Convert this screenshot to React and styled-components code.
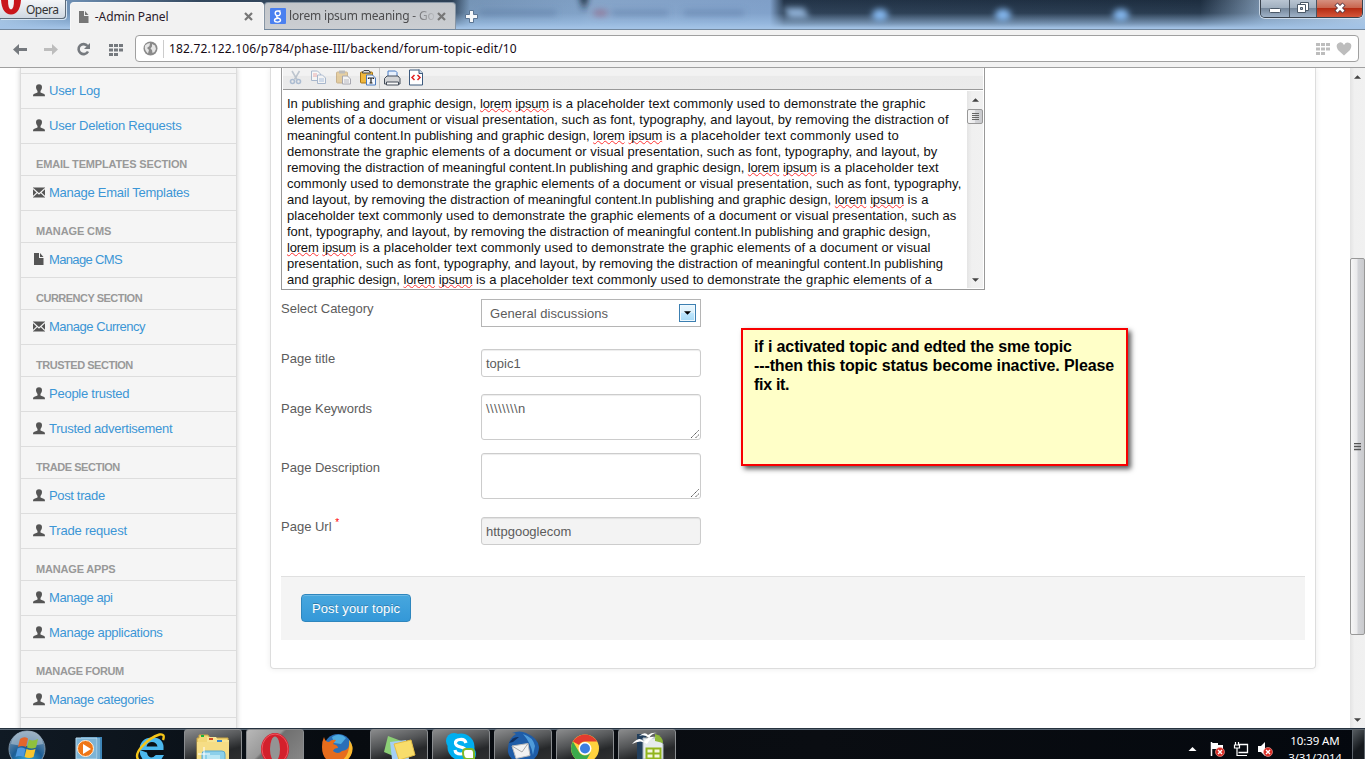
import React from "react";
import styled, { createGlobalStyle, css } from "styled-components";

const Global = createGlobalStyle`
  *, *::before, *::after { box-sizing: border-box; }
  html, body { margin: 0; padding: 0; }
  body { overflow: hidden; background: #fff; }
`;

const ui = `"Noto Sans", "Open Sans", sans-serif`;
const arial = `"Liberation Sans", Arial, sans-serif`;

const Screen = styled.div`
  width: 1365px;
  height: 759px;
  display: flex;
  flex-direction: column;
  overflow: hidden;
  font-family: ${arial};
`;

/* ---------- window chrome ---------- */
const TitleBar = styled.header`
  height: 30px;
  flex: none;
  display: flex;
  align-items: flex-start;
  border-bottom: 1px solid #73889e;
  position: relative;
  background:
    linear-gradient(180deg, rgba(150, 190, 230, 0) 0, rgba(150, 190, 230, 0.1) 45%, rgba(160, 195, 232, 0.65) 80%, #a3c3e6 97%),
    linear-gradient(90deg, #a9c3dc 0, #6d8eb2 70px, #33475d 200px, #2c3f54 452px, #7594b6 470px, #7f9fc4 580px, #86a4c8 590px, #7f9fc8 770px, #233448 784px, #1d2d3f 1200px, #7b93ad 1265px, #b4c9df 1365px);
`;
const Ghosts = styled.svg`
  position: absolute;
  left: 456px;
  top: 0;
`;
const OperaButton = styled.div`
  width: 66px;
  height: 19px;
  border: 1px solid #5d6b7a;
  border-width: 0 1px 1px 0;
  border-radius: 0 0 4px 0;
  background: linear-gradient(#f4f6f8, #cfd8e2);
  box-shadow: 1px 1px 0 #d6e5f3;
  display: flex;
  font: 12px/20px ${ui};
  letter-spacing: -0.5px;
  color: #333;
  gap: 4px;
  margin-right: 4px;
  position: relative;
`;
const Tab = styled.div`
  position: relative;
  height: ${(p) => (p.$active ? 28 : 27)}px;
  width: ${(p) => (p.$active ? 194 : 192)}px;
  margin-top: 2px;
  display: flex;
  align-items: center;
  padding: 0 ${(p) => (p.$active ? 10 : 9)}px 0 ${(p) => (p.$active ? 7 : 5)}px;
  border: 1px solid ${(p) => (p.$active ? "#f8f8f8" : "#8795a4")};
  border-bottom: 0;
  border-radius: 4px 4px 0 0;
  background: ${(p) => (p.$active ? "#f2f2f2" : "linear-gradient(#c3c6ca, #cbced2)")};
`;
const TabTitle = styled.span`
  flex: 1;
  margin-left: 3px;
  font: 12px/18px ${ui};
  letter-spacing: ${(p) => p.$ls || 0}px;
  white-space: nowrap;
  overflow: hidden;
  color: ${(p) => (p.$active ? "#2a1a2a" : "#4c4c4e")};
  ${(p) => !p.$active && css`mask-image: linear-gradient(90deg, #000 82%, transparent 100%);`}
`;
const NewTab = styled.svg`
  position: relative;
  margin: 10px 0 0 9px;
`;
const WindowButtons = styled.div`
  margin-left: auto;
  margin-right: 2px;
  display: flex;
  height: 18px;
  border: 1px solid #39424d;
  border-top: 0;
  border-radius: 0 0 5px 5px;
  overflow: hidden;
  box-shadow: 0 0 0 1px rgba(225, 235, 245, 0.75);
`;
const WinButton = styled.div`
  width: ${(p) => p.$w}px;
  display: flex;
  justify-content: center;
  background: ${(p) =>
    p.$close
      ? "linear-gradient(#d5907f 0, #c9664f 45%, #b52c13 50%, #d5563a 100%)"
      : "linear-gradient(#b9c5d2 0, #a0afbf 45%, #76889c 50%, #9fb2c8 100%)"};
  & + & { border-left: 1px solid #4a5561; }
`;

const NavBar = styled.nav`
  height: 38px;
  flex: none;
  display: flex;
  align-items: center;
  background: #f2f2f2;
  border-bottom: 1px solid #a0a0a0;
  padding: 0 6px 0 13px;
`;
const NavIcons = styled.svg`
  flex: none;
  margin-right: 12px;
`;
const AddressBar = styled.div`
  flex: 1;
  height: 27px;
  display: flex;
  align-items: center;
  background: #fff;
  border: 1px solid #a0a0a0;
  border-radius: 4px;
  padding: 0 6px 0 7px;
`;
const Url = styled.span`
  flex: 1;
  margin-left: 5px;
  border-left: 1px solid #ccc;
  padding-left: 5px;
  font: 12px/18px ${ui};
  letter-spacing: 0.15px;
  color: #150a15;
`;

/* ---------- page ---------- */
const Viewport = styled.div`
  height: 660px;
  flex: none;
  display: flex;
  align-items: flex-start;
  overflow: hidden;
  background: #fff;
  position: relative;
`;
const Sidebar = styled.aside`
  width: 217px;
  height: 670px;
  flex: none;
  margin-left: 20px;
  background: #f5f5f5;
  border: solid #dcdcdc;
  border-width: 0 1px;
  box-shadow: 0 0 5px rgba(0, 0, 0, 0.2);
`;
const SideTop = styled.div`
  height: 6px;
  border-bottom: 1px solid #dddddd;
`;
const SideHeading = styled.h2`
  margin: 0;
  height: 32px;
  padding: 11px 0 0 15px;
  border-bottom: 1px solid #dddddd;
  font: bold 11px/18px ${arial};
  letter-spacing: ${(p) => p.$ls}px;
  color: #999;
  white-space: nowrap;
`;
const SideItem = styled.div`
  height: 35px;
  display: flex;
  align-items: center;
  padding: 0 0 2px 12px;
  border-bottom: 1px solid #dddddd;
  font-size: 13px;
  letter-spacing: ${(p) => p.$ls}px;
  color: #3c96d6;
  white-space: nowrap;
  gap: 4px;
`;
const Panel = styled.main`
  width: 1046px;
  height: 601px;
  flex: none;
  margin-left: 33px;
  padding: 0 10px;
  border: 1px solid #dddddd;
  border-top: 0;
  border-radius: 0 0 4px 4px;
  box-shadow: 0 0 6px rgba(0, 0, 0, 0.08);
`;
const Editor = styled.section`
  width: 704px;
  height: 222px;
  border: 1px solid #999;
  border-top: 0;
  display: flex;
  flex-direction: column;
  padding: 0 1px 1px;
`;
const Toolbar = styled.div`
  height: 22px;
  flex: none;
  border-bottom: 1px solid #999;
  background: linear-gradient(#f2f2f2 0, #f2f2f2 35%, #eaeaea 40%, #ebebeb 100%);
`;
const EditorBody = styled.div`
  flex: 1;
  min-height: 0;
  display: flex;
  padding-top: 1px;
`;
const EditorText = styled.div`
  flex: 1;
  padding: 5px 0 0 4px;
  overflow: hidden;
`;
const Line = styled.div`
  height: 16px;
  font: 13px/16px ${arial};
  letter-spacing: ${(p) => p.$ls}px;
  color: #111;
  white-space: nowrap;
`;
const Run = styled.span`
  letter-spacing: ${(p) => p.$ls}px;
`;
const Misspelt = styled.span`
  text-decoration: underline wavy #f33 1px;
  text-decoration-skip-ink: none;
  text-underline-offset: 0;
  letter-spacing: -0.2px;
`;
const Track = styled.div`
  width: ${(p) => p.$w}px;
  height: 100%;
  flex: none;
  display: flex;
  flex-direction: column;
  align-items: stretch;
  background: linear-gradient(90deg, #e4e4e4, #f0f0f0 30%, #f1f1f1);
`;
const ArrowBox = styled.div`
  height: ${(p) => p.$h}px;
  display: flex;
  align-items: center;
  justify-content: center;
`;
const Thumb = styled.div`
  height: ${(p) => p.$h}px;
  margin-top: ${(p) => p.$top || 0}px;
  border: 1px solid #989898;
  border-radius: 2px;
  background: linear-gradient(90deg, #f6f6f6, #e9e9eb 48%, #d3d4d8 52%, #c9cacd);
  display: flex;
  align-items: center;
  justify-content: center;
`;
const Spring = styled.div`flex: 1;`;

const Field = styled.div`
  display: flex;
  align-items: flex-start;
  height: ${(p) => p.$h}px;
`;
const Label = styled.label`
  width: 200px;
  padding-top: ${(p) => p.$top || 0}px;
  font: 13px/20px ${arial};
  color: #5c5c5c;
`;
const Required = styled.sup`
  color: #f00;
  font-size: 10px;
  line-height: 0;
`;
const Control = styled.div`
  position: relative;
  width: 220px;
  height: ${(p) => p.$h}px;
  padding: 4px;
  border: 1px solid #ccc;
  border-radius: 3px;
  background: ${(p) => (p.$disabled ? "#f3f3f3" : "#fff")};
  box-shadow: inset 0 1px 1px rgba(0, 0, 0, 0.075);
  font: 13px/20px ${arial};
  letter-spacing: ${(p) => p.$ls || 0}px;
  color: #5c5c5c;
`;
const Select = styled(Control)`
  display: flex;
  justify-content: space-between;
  align-items: center;
  padding: 0 4px 0 8px;
  border-radius: 0;
  border-color: #b5b5b5;
  box-shadow: none;
`;
const SelectValue = styled.span`
  padding-top: 2px;
`;
const SelectArrow = styled.div`
  width: 17px;
  height: 18px;
  border: 1px solid #3c7fb1;
  background: linear-gradient(#eaf6fd 0, #d9f0fc 50%, #bee6fd 51%, #a7d9f5 100%);
  box-shadow: inset 0 0 0 1px #eef9ff;
  display: flex;
  align-items: center;
  justify-content: center;
`;
const Grip = styled.svg`
  position: absolute;
  right: 1px;
  bottom: 1px;
`;
const Actions = styled.div`
  height: 64px;
  padding: 17px 20px;
  border-top: 1px solid #e0e0e0;
  background: #f4f4f4;
`;
const PostButton = styled.button`
  width: 110px;
  height: 28px;
  padding: 1px 0 0;
  border: 1px solid #2e86bd;
  border-radius: 4px;
  background: linear-gradient(#47a7de, #3498d8);
  box-shadow: inset 0 1px 0 rgba(255, 255, 255, 0.2);
  color: #fff;
  font: 13px/20px ${arial};
  letter-spacing: 0.15px;
  text-shadow: 0 -1px 0 rgba(0, 0, 0, 0.25);
`;
const Note = styled.div`
  position: absolute;
  left: 741px;
  top: 260px;
  width: 387px;
  height: 138px;
  padding: 7px 11px;
  border: 2px solid #f80000;
  background: #ffffc8;
  box-shadow: 3px 3px 5px rgba(0, 0, 0, 0.65);
  font: bold 16px/19px ${arial};
  color: #000;
`;
const NoteLine = styled.div`
  white-space: nowrap;
  letter-spacing: ${(p) => p.$ls || -0.11}px;
`;

/* ---------- taskbar ---------- */
const Taskbar = styled.footer`
  height: 31px;
  flex: none;
  display: flex;
  background: linear-gradient(90deg, #101a24, #070b10 25%, #0a0d12 60%, #04080e);
  border-top: 1px solid #26323f;
  box-shadow: inset 0 1px 0 #5b6875;
  overflow: hidden;
`;
const TaskButton = styled.div`
  width: ${(p) => p.$w || 58}px;
  height: 40px;
  margin-right: 4px;
  flex: none;
  display: flex;
  justify-content: center;
  ${(p) => p.$open && css`
    border: 1px solid #8a8d90;
    border-radius: 3px;
    background: ${p.$active
      ? "linear-gradient(135deg, #b8b8b8 0, #999 38%, #707070 42%, #8c8c8c 100%)"
      : "linear-gradient(165deg, #8a8b8c 0, #545658 35%, #26282a 60%, #333 100%)"};
  `}
`;
const Tray = styled.div`
  margin-left: auto;
  display: flex;
  color: #fff;
`;
const Clock = styled.div`
  width: 74px;
  padding-top: 3px;
  font: 11.5px/17px ${ui};
  letter-spacing: -0.1px;
  text-align: center;
  white-space: nowrap;
`;
const ShowDesktop = styled.div`
  width: 13px;
  height: 31px;
  border: 1px solid #5d646b;
  background: linear-gradient(135deg, #555b60, #15191d 60%);
`;

/* ---------- icons ---------- */
const UserIcon = () => (
  <svg width="12" height="13" viewBox="0 0 12 13" fill="#555">
    <path d="M3 3.2Q3 .3 6 .3T9 3.2Q9 5.6 7.500 7v1.400l3.700 1.500q.8.4.8 2.400H0q0-2 .8-2.400l3.700-1.500V7Q3 5.600 3 3.200Z" />
  </svg>
);
const MailIcon = () => (
  <svg width="12" height="11" viewBox="0 0 12 11">
    <path d="M0 .5h12v10H0z" fill="#555" />
    <path d="M0 1.500 6 7l6-5.500M0 9.600 4.100 5.600M12 9.600 7.900 5.600" stroke="#f5f5f5" strokeWidth="1.200" fill="none" />
  </svg>
);
const FileIcon = ({ fill = "#555", s = 12 }) => (
  <svg width={s} height={s} viewBox="0 0 12 12" fill={fill}>
    <path d="M1 0h5v5h4.500v7H1zM7 0l3.500 4H7z" />
  </svg>
);
const sideIcons = { user: UserIcon, mail: MailIcon, file: FileIcon };

const CloseIcon = () => (
  <svg width="9" height="9" viewBox="0 0 9 9">
    <path d="M1 1l7 7M8 1 1 8" stroke="#777" strokeWidth="2.200" />
  </svg>
);
const Arrow = ({ down, c = "#444" }) => (
  <svg width="7" height="4" viewBox="0 0 8 4">
    <path d={down ? "M0 0h8L4 4z" : "M0 4h8L4 0z"} fill={c} />
  </svg>
);
const dials = [[0, 0], [5, 0], [10, 0], [0, 4.5], [5, 4.5], [10, 4.5], [0, 9], [5, 9]];
const Dial = ({ x, y, fill }) => (
  <g fill={fill}>
    {dials.map(([a, b]) => <rect key={`${a}-${b}`} x={x + a} y={y + b} width="4" height="3" />)}
  </g>
);
const GripIcon = () => (
  <Grip width="8" height="8" viewBox="0 0 8 8">
    <path d="M0 8 8 0M4.500 8 8 4.500" stroke="#555" strokeWidth="1" strokeDasharray="1.400 .5" />
  </Grip>
);

/* ---------- data ---------- */
const side = [
  ["user", "User Log", -0.2], ["user", "User Deletion Requests", -0.22],
  ["h", "EMAIL TEMPLATES SECTION", -0.16], ["mail", "Manage Email Templates", -0.25],
  ["h", "MANAGE CMS", -0.12], ["file", "Manage CMS", -0.65],
  ["h", "CURRENCY SECTION", -0.5], ["mail", "Manage Currency", -0.48],
  ["h", "TRUSTED SECTION", -0.47], ["user", "People trusted", -0.25], ["user", "Trusted advertisement", -0.26],
  ["h", "TRADE SECTION", -0.46], ["user", "Post trade", -0.35], ["user", "Trade request", -0.2],
  ["h", "MANAGE APPS", -0.18], ["user", "Manage api", -0.45], ["user", "Manage applications", -0.3],
  ["h", "MANAGE FORUM", -0.37], ["user", "Manage categories", -0.35],
];

/* text, tracking, and tracking before the misspelt words where it differs */
const lines = [
  ["In publishing and graphic design, lorem ipsum is a placeholder text commonly used to demonstrate the graphic", 0.07, -0.02],
  ["elements of a document or visual presentation, such as font, typography, and layout, by removing the distraction of", 0.03],
  ["meaningful content.In publishing and graphic design, lorem ipsum is a placeholder text commonly used to", 0.22, -0.02],
  ["demonstrate the graphic elements of a document or visual presentation, such as font, typography, and layout, by", 0.04],
  ["removing the distraction of meaningful content.In publishing and graphic design, lorem ipsum is a placeholder text", 0.13, -0.03],
  ["commonly used to demonstrate the graphic elements of a document or visual presentation, such as font, typography,", 0.035],
  ["and layout, by removing the distraction of meaningful content.In publishing and graphic design, lorem ipsum is a", 0.2, 0],
  ["placeholder text commonly used to demonstrate the graphic elements of a document or visual presentation, such as", 0.028],
  ["font, typography, and layout, by removing the distraction of meaningful content.In publishing and graphic design,", 0],
  ["lorem ipsum is a placeholder text commonly used to demonstrate the graphic elements of a document or visual", 0.085],
  ["presentation, such as font, typography, and layout, by removing the distraction of meaningful content.In publishing", 0.02],
  ["and graphic design, lorem ipsum is a placeholder text commonly used to demonstrate the graphic elements of a", 0.075, -0.03],
];
const spell = (text, before) =>
  text.split(/(lorem|ipsum)/).map((t, i) => {
    if (i % 2) return <Misspelt key={i}>{t}</Misspelt>;
    return i === 0 && before !== undefined ? <Run key={i} $ls={before}>{t}</Run> : t;
  });

const EditorTools = () => (
  <svg width="150" height="21" viewBox="283 67.5 150 21" style={{ display: "block" }}>
    <g opacity=".5" fill="none" stroke="#6f8fb8" strokeWidth="1.600">
      <path d="M292 70.500l5 8.500M299.500 70.500l-5 8.500" stroke="#8c9cae" />
      <circle cx="292.500" cy="81" r="2" /><circle cx="298.500" cy="81" r="2" />
    </g>
    <g opacity=".5" stroke="#6684ae" fill="#fff">
      <path d="M311.500 70.500h6l3 3v6.500h-9z" /><path d="M317.500 74.500h5l3 3v5.500h-8z" />
      <path d="M313 73.500h4M313 75.500h4" stroke="#d66" /><path d="M319 78.500h5M319 80.500h5" stroke="#6b95cf" />
    </g>
    <g opacity=".5">
      <rect x="336.500" y="71.500" width="11" height="11" rx="1" fill="#dcae55" stroke="#a77b34" />
      <rect x="339" y="70" width="6" height="3" fill="#888" />
      <path d="M342.500 75.500h5l3 3v5h-8z" fill="#fff" stroke="#667" /><path d="M344 79.500h5M344 81.500h5" stroke="#889" />
    </g>
    <rect x="360.500" y="71.500" width="12" height="11" rx="1" fill="#f1b83d" stroke="#a87517" />
    <path d="M362.500 71.500 364 70h5l1.500 2.500h-8z" fill="#ddd" stroke="#444" />
    <path d="M366.500 74.500h6l3 3v7h-9z" fill="#f4f8ff" stroke="#4978bd" />
    <path d="M368.500 78.500v-1h5v1M371 77.500v5M369.500 82.500h3" stroke="#222" fill="none" strokeWidth="1.200" />
    <path d="M379.500 67v21" stroke="#c4c4c4" />
    <path d="M388 76.500v-6h7.500l1.500 1.500v4.500z" fill="#e7f0fd" stroke="#4a7cc4" />
    <path d="M384.500 78 387 75.500h11l2 2.500v5.500h-15.500z" fill="#d3d4d6" stroke="#444d59" />
    <path d="M386.500 81.500h12v3h-12z" fill="#f7f7f7" stroke="#444d59" />
    <path d="M409.500 69.500h10l3 3v12h-13z" fill="#fff" stroke="#3d5a7d" />
    <path d="M419 69v4h4" fill="#c7d5e5" stroke="#3d5a7d" />
    <path d="M414.500 74.500 412 77l2.500 2.500M417.500 74.500 420 77l-2.500 2.500" stroke="#e02020" strokeWidth="1.500" fill="none" />
  </svg>
);

const StartOrb = () => (
  <svg width="38" height="30" viewBox="8 729 38 30">
    <defs>
      <radialGradient id="orb" cx=".5" cy=".9" r=".9"><stop offset="0" stopColor="#35b7e8" /><stop offset=".5" stopColor="#1c5d94" /><stop offset="1" stopColor="#829ab0" /></radialGradient>
    </defs>
    <circle cx="27" cy="749" r="18" fill="url(#orb)" stroke="#7d94a8" />
    <path d="M11 744q2-12 16-13t16 13q-16 4-32 0z" fill="#b8c8d6" opacity=".55" />
    <path d="M20 739q4-3 8-.5l-2 8.500q-4-2-8 0z" fill="#e2662c" />
    <path d="M29 739.500q4 2 9-.5l-2 8.500q-4 2-9 0z" fill="#8fc13d" />
    <path d="M17.500 748.500q4-2 8 .5l-2 8q-4-2-8 0z" fill="#4d97dc" />
    <path d="M26.500 749q4 2 9 0l-2 8q-4 2-9 0z" fill="#f8c62e" />
  </svg>
);
const MediaIcon = () => (
  <svg width="32" height="30" viewBox="71 729 32 30">
    <path d="M80 737h21v22H80z" fill="#3f86b8" /><path d="M75 738h21v21H75z" fill="#7db4d6" stroke="#b9d9ec" />
    <path d="M98 738v21" stroke="#a6d0e6" />
    <circle cx="84.500" cy="748.500" r="8" fill="#ef7616" stroke="#fff0dc" /><path d="M82 744l8 5-8 5z" fill="#fff" />
  </svg>
);
const IEIcon = () => (
  <svg width="36" height="30" viewBox="133 729 36 30">
    <path d="M140 750h23.500q1-12.500-11-12.500-12.500 0-13 12.500 0 5 3 9h19l2.500-4h-8q-7 3-8-2z" fill="#4cb8ee" />
    <path d="M146.500 746.500q1-4.500 5.500-4.500t5.500 4.500z" fill="#0a1016" />
    <path d="M147 751.500h17v3h-8q-2 3-5 3-4-1-4-6z" fill="#0a1016" />
    <path d="M138.500 760q-4-5 3-13 9-10 18-12.500 6-1 3.500 5.500" fill="none" stroke="#f5c518" strokeWidth="2.400" />
  </svg>
);
const ExplorerIcon = () => (
  <svg width="36" height="29" viewBox="195 730 36 29">
    <path d="M199 735h9l2 3h18v21h-31v-21h2z" fill="#f2d777" stroke="#c9a544" />
    <path d="M207 737h9l2 3h11v19h-22z" fill="#f8e594" /><path d="M197 742h32v17h-32z" fill="#f6dd85" />
    <path d="M201 735h3v2h-3z" fill="#19b43d" /><path d="M209 738h4v2h-4z" fill="#d54b22" /><path d="M217 740h5v2h-5z" fill="#3587d6" />
    <path d="M202 759v-5q0-3 3-3h17q3 0 3 3v5" fill="#8cd0ea" stroke="#5aa9cc" /><path d="M207 759v-4h13v4" fill="#b8e6f4" />
    <path d="M204 747v13M198 754h12" stroke="#fff" strokeWidth="1" />
  </svg>
);
const OperaTask = () => (
  <svg width="34" height="29" viewBox="258 730 34 29">
    <ellipse cx="275" cy="749" rx="14" ry="16" fill="#d3202c" /><ellipse cx="275" cy="749" rx="5" ry="12.500" fill="#949494" />
    <ellipse cx="275" cy="749" rx="13" ry="15" fill="none" stroke="#ef5560" />
  </svg>
);
const FirefoxIcon = () => (
  <svg width="34" height="30" viewBox="320 729 34 30">
    <circle cx="338" cy="748" r="14" fill="#2a6fb8" /><path d="M332 737q8-5 14 1l-5 6-7-1z" fill="#4dabe0" />
    <path d="M324 737q1 5 5 5 3-3 7-2l-3 4q5 1 5 4-4 0-5 3 5 4 9 0 8-1 7-9 5 4 2 13-4 9-14 9-15-2-15-17 0-6 2-10z" fill="#e66c1c" />
    <path d="M349 740q6 7 2 15-4 7-12 8 12-8 10-23z" fill="#f9b82d" />
  </svg>
);
const NotesIcon = () => (
  <svg width="34" height="29" viewBox="382 730 34 29">
    <path d="M388 736l16 6-6 16-14-6z" fill="#8ccf76" /><path d="M390 742l16-2 3 19h-17z" fill="#a4cff5" />
    <path d="M394 744l17-4 4 15-16 5z" fill="#f8dd6b" stroke="#e4be47" />
  </svg>
);
const SkypeIcon = () => (
  <svg width="34" height="29" viewBox="444 730 34 29">
    <circle cx="454" cy="741" r="8" fill="#00aff0" /><circle cx="461" cy="747" r="13.500" fill="#00aff0" /><circle cx="468" cy="754" r="8" fill="#00aff0" />
    <path d="M466 743q-1-4-6-3.500-5 .5-4.500 4 .5 2.500 5 3.500 5 1 5 4t-5 3q-5 0-5.500-4" fill="none" stroke="#fff" strokeWidth="3.200" />
    <path d="M463 752q0-3 3-3h5q3 0 3 4v6h-7q-4 0-4-7z" fill="#fff" stroke="#7fb828" strokeWidth="2" />
  </svg>
);
const BirdIcon = () => (
  <svg width="36" height="29" viewBox="505 730 36 29">
    <path d="M508 752q-1-13 8-18-1-1-4-1 8-3 14 0 12 5 13 14 0 8-6 13h-20q-4-3-5-8z" fill="#1f5da8" />
    <path d="M523 734q10 3 12 12l-2 9q-2-12-10-21z" fill="#4f9bd9" /><path d="M509 743q4-7 10-6l-6 5z" fill="#11305f" />
    <path d="M512 746l16-2.500 2 12-14 3z" fill="#f2f2f2" stroke="#bbb" /><path d="M512 746l10 6 6-8.500" fill="none" stroke="#a9a9a9" />
  </svg>
);
const ChromeTask = () => (
  <svg width="32" height="29" viewBox="569 732.5 32 29">
    <circle cx="585" cy="751" r="14" fill="#ffd23e" />
    <path d="M572.900 744A14 14 0 0 1 597.100 744H585a7 7 0 0 0-6 3.500z" fill="#e33b2e" />
    <path d="M572.900 744A14 14 0 0 0 585 765l6-10.500a7 7 0 0 1-12 0z" fill="#3cab4c" />
    <circle cx="585" cy="751" r="6.500" fill="#fff" /><circle cx="585" cy="751" r="5" fill="#3d7fe0" />
  </svg>
);
const OfficeIcon = () => (
  <svg width="36" height="29" viewBox="629 730 36 29">
    <path d="M637 734h9v25h-9z" fill="#233f5c" /><path d="M643 738h15l5 6v15h-20z" fill="#e6ebef" stroke="#a7b2ba" /><path d="M655 734q8 2 8 9l-8-2z" fill="#8fb83a" />
    <path d="M632 744q8-9 12-2 4-6 12-5-6 1-9 7-6-5-15 0zM639 736q6-5 9-1 4-3 9-2-5 0-8 5-4-4-10-2z" fill="#fff" />
    <path d="M646.500 748.500h14v10h-14zM653.500 748v11M646 753.500h15" fill="#f4f7dc" stroke="#92b51c" strokeWidth="2" />
  </svg>
);

const Badge = ({ x, y }) => (
  <g>
    <circle cx={x} cy={y} r="4.500" fill="#d92a22" stroke="#f3aaa5" strokeWidth=".6" />
    <path d={`M${x - 2} ${y - 2}l4 4m0-4-4 4`} stroke="#fff" strokeWidth="1.400" />
  </g>
);

export default function App() {
  return (
    <Screen>
      <Global />
      <TitleBar>
        <Ghosts width="800" height="29" viewBox="456 0 800 29">
          <defs>
            <filter id="soft" filterUnits="userSpaceOnUse" x="456" y="-20" width="800" height="70">
              <feGaussianBlur stdDeviation="3" />
            </filter>
          </defs>
          <g filter="url(#soft)">
            <path d="M579 -6h10l-5 17z" fill="#182635" />
            <path d="M480 13h76M612 13h56M684 13h60" stroke="#50709a" strokeWidth="5" opacity=".45" />
            <path d="M594 13h13" stroke="#9a5c78" strokeWidth="6" opacity=".6" />
            <path d="M784 8h20l5 10h-20z" fill="#91b2d8" />
            <g fill="#84b8f0"><ellipse cx="880" cy="15" rx="8" ry="6" /><ellipse cx="1003" cy="15" rx="8" ry="6" /><ellipse cx="1121" cy="15" rx="8" ry="6" /></g>
          </g>
        </Ghosts>
        <OperaButton>
          <svg width="22" height="16" viewBox="0 0 22 16">
            <path d="M1 0h20q-1 14-10 14.500Q2 14 1 0z" fill="#c9151b" />
            <path d="M8 0h6q0 9-3 9.500Q8 9 8 0z" fill="#f1f3f6" />
          </svg>
          Opera
        </OperaButton>
        <Tab $active>
          <FileIcon fill="#777" s={12} />
          <TabTitle $active $ls={-0.12}>{"\u2009-Admin Panel"}</TabTitle>
          <CloseIcon />
        </Tab>
        <Tab>
          <svg width="16" height="16" viewBox="0 0 16 16">
            <rect width="16" height="16" rx="1" fill="#4a80f0" />
            <path d="M10.500 3H7.500a2.300 2.300 0 1 0 0 4.600 2.300 2.300 0 0 0 1-4.500M7.500 7.600q-1.500 1.200 0 2 3 1 3 2.500 0 2-3 2t-3-1.800q0-1.800 3.500-2" fill="none" stroke="#fff" strokeWidth="1.400" />
          </svg>
          <TabTitle $ls={-0.2}>lorem ipsum meaning - Go</TabTitle>
          <CloseIcon />
        </Tab>
        <NewTab width="13" height="13" viewBox="0 0 13 13">
          <path d="M4.500.5h4v4h4v4h-4v4h-4v-4h-4v-4h4z" fill="#f6f8fa" stroke="#5b7593" />
        </NewTab>
        <WindowButtons>
          <WinButton $w={28}>
            <svg width="14" height="16"><rect x="1.500" y="8.500" width="11" height="4" rx="1" fill="#fff" stroke="#4b5968" /></svg>
          </WinButton>
          <WinButton $w={27}>
            <svg width="14" height="16"><path d="M4.500 2.500h8v8h-8z" fill="#fff" stroke="#4b5968" /><path d="M1.500 4.500h8v8h-8z" fill="#fff" stroke="#4b5968" /><path d="M4.500 7.500h2v2h-2z" fill="#a9b6c6" stroke="#4b5968" /></svg>
          </WinButton>
          <WinButton $w={46} $close>
            <svg width="14" height="16"><path d="M3 4l8 8M11 4l-8 8" stroke="#5a3b45" strokeWidth="4.500" /><path d="M3.500 4.500l7 7M10.500 4.500l-7 7" stroke="#fff" strokeWidth="2.600" /></svg>
          </WinButton>
        </WindowButtons>
      </TitleBar>

      <NavBar>
        <NavIcons width="110" height="20" viewBox="13 38 110 20">
          <path d="M13 48.500 19 43v4h8v3h-8v4z" fill="#75797e" />
          <path d="M58 48.500 52 43v4h-8v3h8v4z" fill="#bdbdbd" />
          <path d="M87.500 45A5 5 0 1 0 88 50.500" fill="none" stroke="#75797e" strokeWidth="2.600" />
          <path d="M90 42v6h-6z" fill="#75797e" />
          <Dial x={109} y={43} fill="#75797e" />
        </NavIcons>
        <AddressBar>
          <svg width="15" height="15" viewBox="0 0 15 15">
            <circle cx="7.500" cy="7.500" r="7" fill="#8a8a8a" />
            <path d="M2 4.500Q4 2 7 2L6.500 5 4 7l2 2-1 3.500Q1 9 2 4.500zM9 3l3 1.500 1 3.500-1.500 3L9.500 12 9 9 7.500 7.500 9 5.500z" fill="#e6e6e6" />
          </svg>
          <Url>182.72.122.106/p784/phase-III/backend/forum-topic-edit/10</Url>
          <svg width="36" height="14" viewBox="0 0 36 14">
            <Dial x={0} y={1} fill="#bdbdbd" />
            <path d="M28 13.500 22 8Q19 3 22.500 1T28 3Q30-.5 33.500 1T34 8z" fill="#bdbdbd" />
          </svg>
        </AddressBar>
      </NavBar>

      <Viewport>
        <Sidebar>
          <SideTop />
          {side.map(([kind, text, ls]) => {
            if (kind === "h") return <SideHeading key={text} $ls={ls}>{text}</SideHeading>;
            const Icon = sideIcons[kind];
            return <SideItem key={text} $ls={ls}><Icon />{text}</SideItem>;
          })}
        </Sidebar>

        <Panel>
          <Editor>
            <Toolbar><EditorTools /></Toolbar>
            <EditorBody>
              <EditorText>
                {lines.map(([t, ls, before], i) => <Line key={i} $ls={ls}>{spell(t, before)}</Line>)}
              </EditorText>
              <Track $w={16}>
                <ArrowBox $h={18}><Arrow /></ArrowBox>
                <Thumb $h={15}>
                  <svg width="7" height="7"><path d="M0 .5h7M0 2.500h7M0 4.500h7M0 6.500h7" stroke="#666" /></svg>
                </Thumb>
                <Spring />
                <ArrowBox $h={16}><Arrow down /></ArrowBox>
              </Track>
            </EditorBody>
          </Editor>
          <TopicForm />
        </Panel>

        <Spring />
        <Track $w={15}>
          <ArrowBox $h={17}><Arrow /></ArrowBox>
          <Thumb $h={377} $top={173}>
            <svg width="8" height="8"><path d="M0 .5h7M0 3.500h7M0 6.500h7" stroke="#555" strokeWidth="1.500" /></svg>
          </Thumb>
          <Spring />
          <ArrowBox $h={17}><Arrow down /></ArrowBox>
        </Track>

        <Note>
          <NoteLine>if i activated topic and edted the sme topic</NoteLine>
          <NoteLine>---then this topic status become inactive. Please</NoteLine>
          <NoteLine $ls={-0.3}>fix it.</NoteLine>
        </Note>
      </Viewport>

      <Taskbar>
        <TaskButton $w={54}><StartOrb /></TaskButton>
        <TaskButton $w={60}><MediaIcon /></TaskButton>
        <TaskButton $w={58}><IEIcon /></TaskButton>
        <TaskButton $open><ExplorerIcon /></TaskButton>
        <TaskButton $open $active><OperaTask /></TaskButton>
        <TaskButton><FirefoxIcon /></TaskButton>
        <TaskButton $open><NotesIcon /></TaskButton>
        <TaskButton $open><SkypeIcon /></TaskButton>
        <TaskButton $open><BirdIcon /></TaskButton>
        <TaskButton $open><ChromeTask /></TaskButton>
        <TaskButton $open><OfficeIcon /></TaskButton>
        <Tray>
          <svg width="100" height="30" viewBox="1178 729 100 30">
            <path d="M1188.500 751l4-4 4 4z" fill="#fff" />
            <path d="M1211.500 742v14" stroke="#fff" strokeWidth="1.500" /><path d="M1212 743h6v2h5v6h-6v-2h-5z" fill="#fff" />
            <Badge x={1220} y={752} />
            <path d="M1238.500 744.500h9v8h-9" fill="none" stroke="#fff" strokeWidth="1.300" /><path d="M1240 755.500h7M1235.500 742v3M1238.500 742v3M1234.500 745h5v3h-5zM1237 748v7.500h3" stroke="#fff" fill="none" strokeWidth="1.200" />
            <path d="M1258 746h3l4-4v14l-4-4h-3z" fill="#fff" /><Badge x={1268} y={752} />
          </svg>
          <Clock>10:39 AM<br />3/31/2014</Clock>
          <ShowDesktop />
        </Tray>
      </Taskbar>
    </Screen>
  );
}

const FormArea = styled.form`
  padding-top: 9px;
`;

function TopicForm() {
  return (
    <FormArea>
      <Field $h={50}>
        <Label>Select Category</Label>
        <Select $h={28} $ls={0.05}>
          <SelectValue>General discussions</SelectValue>
          <SelectArrow><Arrow down c="#000" /></SelectArrow>
        </Select>
      </Field>
      <Field $h={45}>
        <Label>Page title</Label>
        <Control $h={28}>topic1</Control>
      </Field>
      <Field $h={59}>
        <Label $top={5}>Page Keywords</Label>
        <Control $h={46} $ls={0.38}>{"\\\\\\\\\\\\\\\\n"}<GripIcon /></Control>
      </Field>
      <Field $h={64}>
        <Label $top={5}>Page Description</Label>
        <Control $h={46}><GripIcon /></Control>
      </Field>
      <Field $h={59}>
        <Label>Page Url <Required>*</Required></Label>
        <Control $h={28} $disabled>httpgooglecom</Control>
      </Field>
      <Actions><PostButton type="button">Post your topic</PostButton></Actions>
    </FormArea>
  );
}
